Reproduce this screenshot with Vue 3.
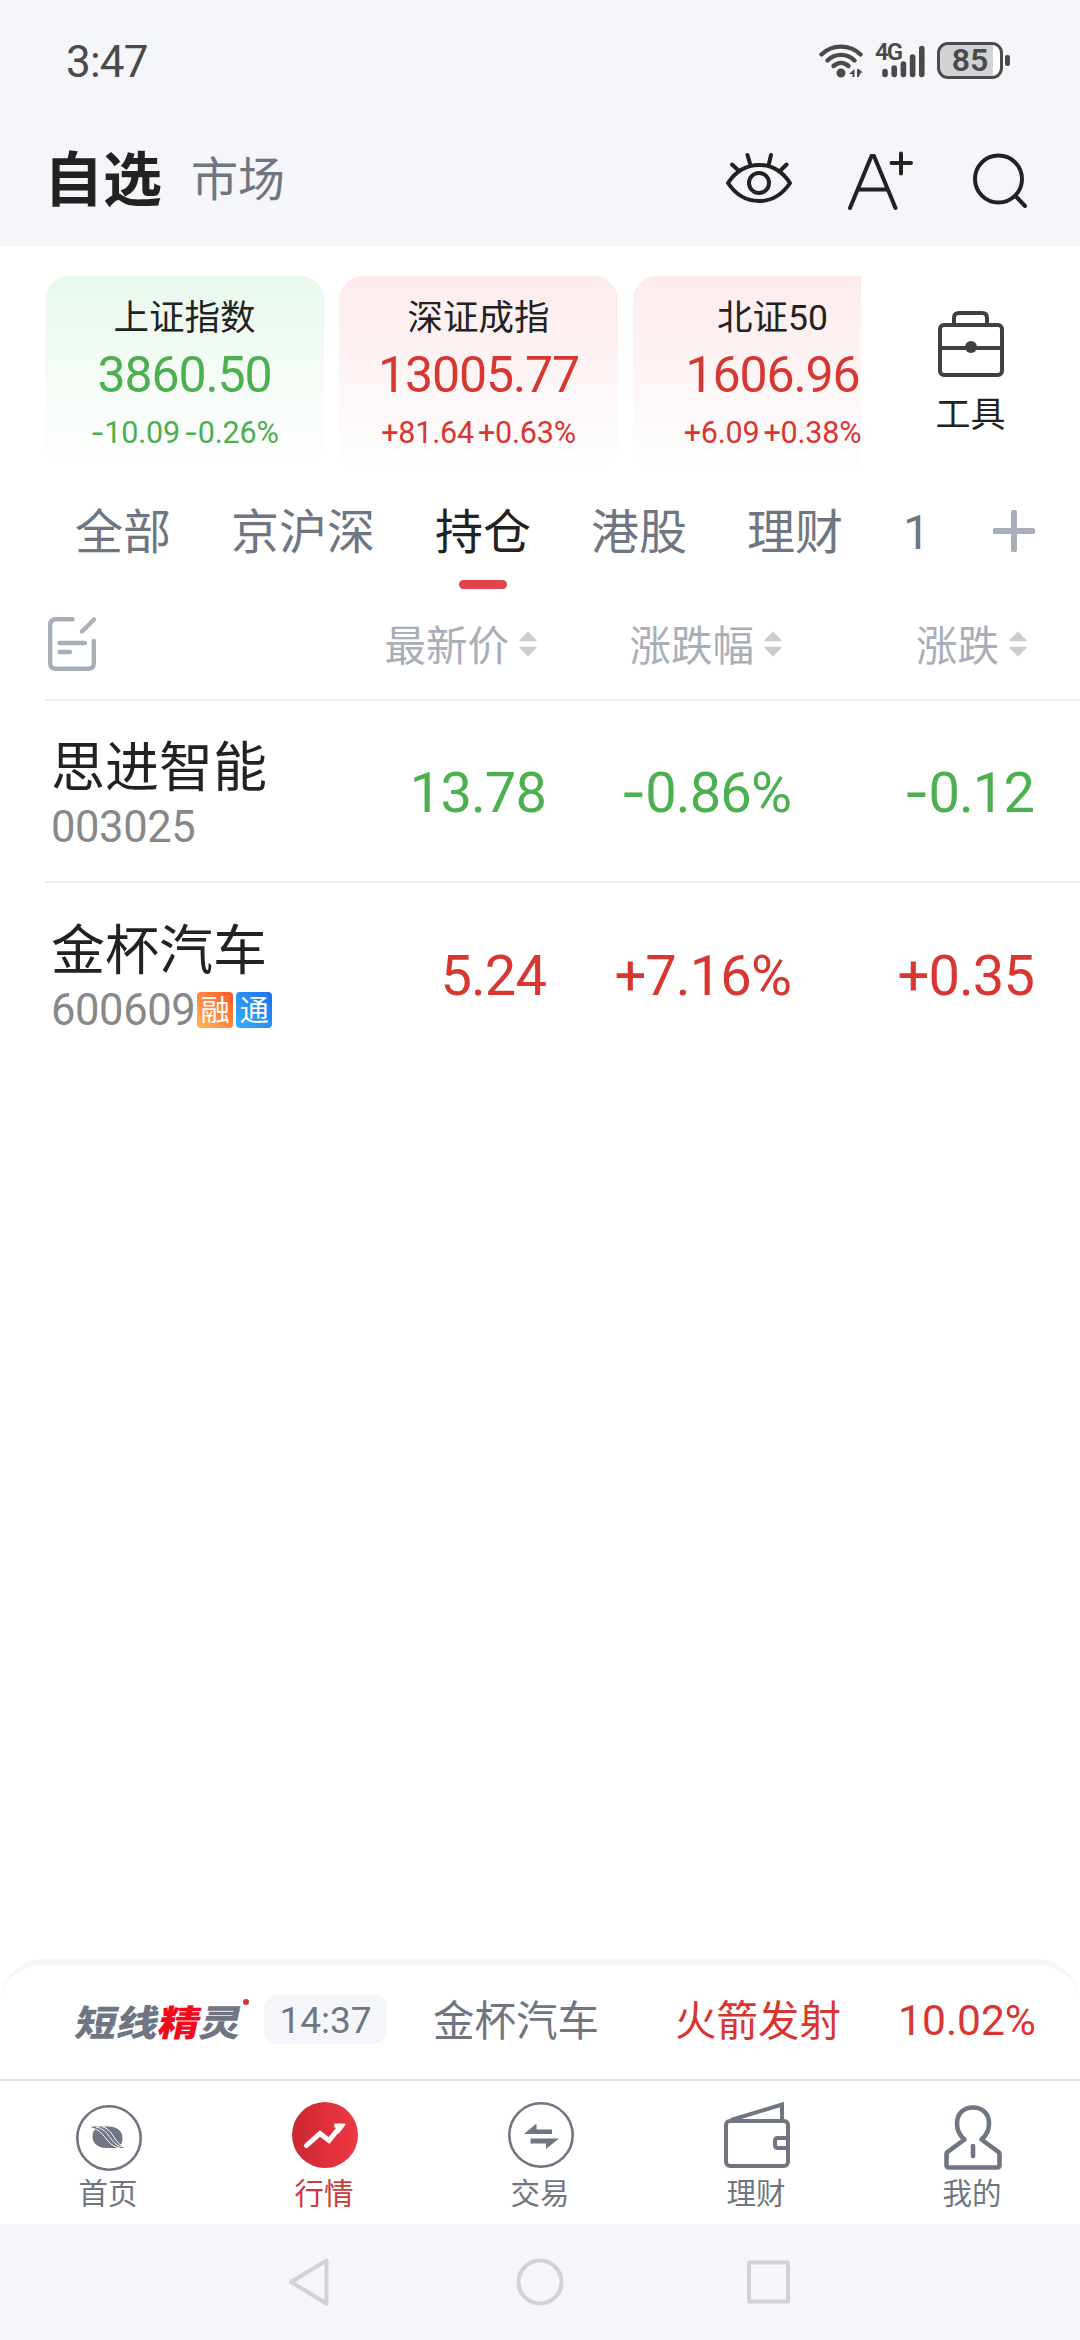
<template>
  <div class="screen">
    <header class="top">
      <div class="status-bar">
        <span class="clock">3:47</span>
        <div class="status-icons">
          <svg class="wifi" viewBox="0 0 44 36" width="44" height="36">
            <g fill="none" stroke="#4a4a4a" stroke-width="4.4" stroke-linecap="round">
              <path d="M2.500 11.500 C13 1 31 1 41.500 11.500" />
              <path d="M8.500 17.500 C16 10 28 10 35.500 17.500" />
              <path d="M14.500 23 C19 19 25 19 29.500 23" />
            </g>
            <circle cx="22" cy="30" r="4.500" fill="#4a4a4a" />
            <path d="M35.500 26 v8 h-2 v-3 h-3.500 z M38 26 h1.500 l4.500 3.500 h-2 l-2.500 4.500 h-1.500 z" fill="#4a4a4a" />
          </svg>
          <div class="signal">
            <span class="net">4G</span>
            <svg viewBox="0 0 52 36" width="52" height="36">
              <g stroke="#4a4a4a" stroke-width="5.600" stroke-linecap="round">
                <path d="M12 28.500V31.500M21.200 25V31.500M30.400 21V31.500M39.600 14V31.500M48.800 5.500V31.500" />
              </g>
            </svg>
          </div>
          <div class="battery">
            <span>85</span>
          </div>
          <i class="nub"></i>
        </div>
      </div>
      <div class="title-bar">
        <h1>自选</h1>
        <span class="market">市场</span>
        <div class="actions">
          <svg viewBox="0 0 66 60" width="66" height="60">
            <g fill="none" stroke="#222" stroke-width="4" stroke-linecap="round" stroke-linejoin="round">
              <path d="M2 33 C18 9 48 9 64 33 C48 57 18 57 2 33Z" />
              <circle cx="33" cy="33" r="10" />
              <path d="M12 20 L6 14.500M24 13.500 L21.500 5M43 13.500 L45 5M55 20 L60.500 14.500" />
            </g>
          </svg>
          <svg viewBox="0 0 66 60" width="66" height="60">
            <g fill="none" stroke="#222" stroke-width="4" stroke-linecap="round" stroke-linejoin="round">
              <path d="M3 58 L24.500 6 H27 L48.500 58M12 39.500H40" />
              <path d="M54 3.500V23.500M44.500 13H64" />
            </g>
          </svg>
          <svg viewBox="0 0 56 60" width="56" height="60">
            <g fill="none" stroke="#222" stroke-width="4" stroke-linecap="round">
              <circle cx="26.500" cy="29" r="23.500" />
              <path d="M43.500 46 L53 56" />
            </g>
          </svg>
        </div>
      </div>
    </header>

    <section class="indices">
      <div class="strip">
        <div v-for="item in indices" :key="item.name" class="card" :class="item.dir">
          <div class="card-name">{{ item.name }}</div>
          <div class="card-value">{{ item.value }}</div>
          <div class="card-change">
            <span><b class="sign">{{ item.change[0] }}</b>{{ item.change.slice(1) }}</span>
            <span><b class="sign">{{ item.percent[0] }}</b>{{ item.percent.slice(1) }}</span>
          </div>
        </div>
      </div>
      <div class="tools">
        <svg viewBox="0 0 66 66" width="66" height="66">
          <g fill="none" stroke="#404040" stroke-width="4">
            <rect x="2" y="14" width="62" height="50" rx="4" />
            <path d="M16 14 V7 Q16 2 21 2 H44 Q49 2 49 7 V14M2 37H64" />
          </g>
          <circle cx="33" cy="36" r="6" fill="#404040" />
        </svg>
        <span>工具</span>
      </div>
    </section>

    <nav class="tabs">
      <span v-for="tab in tabs" :key="tab" class="tab" :class="{ active: tab === current }" @click="current = tab">{{ tab }}</span>
      <svg class="plus" viewBox="0 0 42 42" width="42" height="42">
        <path d="M21 2.500V39.500M2.500 21H39.500" stroke="#a9afb9" stroke-width="6" stroke-linecap="round" />
      </svg>
    </nav>

    <section class="list">
      <div class="row head">
        <div class="col-name">
          <svg class="edit" viewBox="0 0 48 54" width="48" height="54">
            <g fill="none" stroke="#a9afb9" stroke-width="4.400" stroke-linecap="round" stroke-linejoin="round">
              <path d="M24.500 2.200 H8 Q2.200 2.200 2.200 8 V46 Q2.200 51.800 8 51.800 H40 Q45.800 51.800 45.800 46 V24" />
              <path d="M34 14.500 L46 2.500M11.500 26H37M11.500 35H22" />
            </g>
          </svg>
        </div>
        <div v-for="(col, i) in columns" :key="col" class="col" :class="'c' + i">
          <span>{{ col }}</span>
          <svg viewBox="0 0 18 26" width="18" height="26">
            <path d="M9 0.500 L17.500 9 Q18 10 17 10.300 H1 Q0 10 0.500 9Z M9 25.500 L17.500 17 Q18 16 17 15.700 H1 Q0 16 0.500 17Z" fill="#ccc" />
          </svg>
        </div>
      </div>
      <div v-for="stock in stocks" :key="stock.code" class="row stock">
        <div class="col-name">
          <div class="stock-name">{{ stock.name }}</div>
          <div class="stock-code">
            <span>{{ stock.code }}</span>
            <i v-for="tag in stock.tags" :key="tag.text" class="tag" :class="tag.kind">{{ tag.text }}</i>
          </div>
        </div>
        <div class="num c0" :class="stock.dir">{{ stock.price }}</div>
        <div class="num c1" :class="stock.dir"><b class="sign">{{ stock.percent[0] }}</b>{{ stock.percent.slice(1) }}</div>
        <div class="num c2" :class="stock.dir"><b class="sign">{{ stock.change[0] }}</b>{{ stock.change.slice(1) }}</div>
      </div>
    </section>

    <section class="ticker">
      <div class="logo">短线<em>精</em>灵</div>
      <i class="dot"></i>
      <span class="time">14:37</span>
      <span class="ticker-name">金杯汽车</span>
      <span class="ticker-event">火箭发射</span>
      <span class="ticker-rate">10.02%</span>
    </section>

    <nav class="bottom-nav">
      <div class="nav-item">
        <svg viewBox="0 0 68 70" width="68" height="70">
          <circle cx="35" cy="36" r="31.700" fill="none" stroke="#6f7682" stroke-width="2.600" />
          <path d="M17 24.500 H36 C44 25 48.500 30 48.500 36 C48.500 40 47.500 42 46.500 43 L50 46 H32 C23 46 18.500 40 18.500 35 C18.500 31 19.500 29 21 27.500Z" fill="#6f7682" />
          <path d="M18 26.500 C31 27 31 44 46 46M22 25 C36 27 35 42 48 45M28 24.500 C40 28 39 40 49 44" fill="none" stroke="#fff" stroke-width="1" />
        </svg>
        <span>首页</span>
      </div>
      <div class="nav-item on">
        <svg viewBox="0 0 68 70" width="68" height="70">
          <defs>
            <linearGradient id="market-red" x1="0" x2="1" y1="0" y2="0">
              <stop offset="0" stop-color="#cb2730" />
              <stop offset="1" stop-color="#f03845" />
            </linearGradient>
          </defs>
          <circle cx="35" cy="33" r="33" fill="url(#market-red)" />
          <path d="M16.500 43.500 L30 31.500 L39 38.500 L50 25" fill="none" stroke="#fff" stroke-width="5" stroke-linecap="round" />
          <path d="M44.500 21.500 H55 Q56 22 55 23.500 L48.500 32 L47 26.500 L44 25Z" fill="#fff" />
        </svg>
        <span>行情</span>
      </div>
      <div class="nav-item">
        <svg viewBox="0 0 68 70" width="68" height="70">
          <circle cx="35" cy="33" r="31.700" fill="none" stroke="#6f7682" stroke-width="2.600" />
          <path d="M18 32 L30.500 21.500 V27.500 H46 V32Z M24.500 36.500 H53 L40 47 V41.500 H24.500Z" fill="#6f7682" />
        </svg>
        <span>交易</span>
      </div>
      <div class="nav-item">
        <svg viewBox="0 0 68 70" width="68" height="70">
          <g fill="none" stroke="#6f7682" stroke-width="4">
            <rect x="4" y="19" width="62" height="45" rx="4" />
            <path d="M9 18 L60 2.500 V18M65 36 H56 Q53 36 53 39 V43 Q53 46 56 46 H65" />
          </g>
        </svg>
        <span>理财</span>
      </div>
      <div class="nav-item">
        <svg viewBox="0 0 68 70" width="68" height="70">
          <g fill="none" stroke="#6f7682" stroke-width="4.600" stroke-linejoin="round">
            <path d="M26.500 37.500 C21 33 19 27 19 21.500 C19 11 26 5.500 35 5.500 C44 5.500 51 11 51 21.500 C51 27 49 33 43.500 37.500 L60.500 50 Q61.500 51 61.500 52.500 V63 Q61.500 65.500 59 65.500 H11 Q8.500 65.500 8.500 63 V52.500 Q8.500 51 9.500 50Z" />
            <path d="M35 44V54" stroke-linecap="round" />
          </g>
        </svg>
        <span>我的</span>
      </div>
    </nav>

    <footer class="system-bar">
      <svg viewBox="0 0 504 48" width="504" height="48">
        <g fill="none" stroke="#d2d2d2" stroke-width="4" stroke-linejoin="round">
          <path d="M38.500 2.500 V45.500 L3 24Z" />
          <circle cx="252" cy="24" r="21.500" />
          <rect x="461" y="4.500" width="39" height="39" />
        </g>
      </svg>
    </footer>
  </div>
</template>

<script setup>
import { ref } from 'vue'

const current = ref('持仓')
const tabs = ['全部', '京沪深', '持仓', '港股', '理财', '1']
const columns = ['最新价', '涨跌幅', '涨跌']

const indices = [
  { name: '上证指数', value: '3860.50', change: '-10.09', percent: '-0.26%', dir: 'down' },
  { name: '深证成指', value: '13005.77', change: '+81.64', percent: '+0.63%', dir: 'up' },
  { name: '北证50', value: '1606.96', change: '+6.09', percent: '+0.38%', dir: 'up' }
]

const stocks = [
  { name: '思进智能', code: '003025', tags: [], price: '13.78', percent: '-0.86%', change: '-0.12', dir: 'down' },
  {
    name: '金杯汽车',
    code: '600609',
    tags: [
      { text: '融', kind: 'margin' },
      { text: '通', kind: 'connect' }
    ],
    price: '5.24',
    percent: '+7.16%',
    change: '+0.35',
    dir: 'up'
  }
]
</script>

<style>
body {
  margin: 0;
  background: #fff;
}
</style>

<style scoped>
.screen {
  display: flex;
  flex-direction: column;
  width: 1080px;
  height: 2340px;
  overflow: hidden;
  background: #fff;
  color: #222;
  font-family: "Noto Sans CJK SC", "Noto Sans", sans-serif;
  white-space: nowrap;
}

.clock,
.net,
.battery,
.card-name,
.card-value,
.card-change,
.tabs,
.stock-code span,
.num,
.time,
.ticker-rate {
  font-family: Roboto, "Noto Sans CJK SC", sans-serif;
}

svg {
  display: block;
  flex: none;
}

.top {
  height: 246px;
  flex: none;
  background: #f4f6fa;
}

.status-bar {
  display: flex;
  align-items: center;
  justify-content: space-between;
  height: 121px;
  padding: 0 70px 0 66px;
  color: #4a4a4a;
}

.clock {
  font-size: 44px;
  line-height: 60px;
  padding-top: 3px;
  letter-spacing: -0.8px;
}

.status-icons {
  display: flex;
  align-items: center;
}

.signal {
  position: relative;
  margin: 0 12px 0 10px;
}

.net {
  position: absolute;
  left: 2px;
  top: -3px;
  font-size: 24px;
  line-height: 24px;
  font-weight: 600;
  letter-spacing: -2px;
}

.battery {
  box-sizing: border-box;
  width: 66px;
  height: 37px;
  border: 3px solid #4a4a4a;
  border-radius: 11px;
  background: linear-gradient(90deg, #d2d3d6 88%, #fff 88%);
  text-align: center;
  font-size: 32px;
  line-height: 31px;
  font-weight: 600;
}

.nub {
  width: 5px;
  height: 11px;
  margin-left: 2px;
  border-radius: 2px;
  background: #4a4a4a;
}

.title-bar {
  display: flex;
  align-items: center;
  box-sizing: border-box;
  height: 125px;
  padding: 0 52px 8px 44px;
}

h1 {
  margin: 0;
  font-size: 59px;
  line-height: 80px;
  font-weight: 700;
  padding-bottom: 7px;
}

.market {
  margin-left: 29px;
  font-size: 47px;
  line-height: 60px;
  color: #6f7682;
  padding-bottom: 7px;
}

.actions {
  display: flex;
  margin-left: auto;
}

.actions svg:nth-child(2) {
  margin: 0 59px 0 55px;
}

.indices {
  display: flex;
  height: 195px;
  padding: 30px 0 0 45px;
  flex: none;
}

.strip {
  display: flex;
  gap: 15px;
  width: 816px;
  overflow: hidden;
}

.card {
  flex: none;
  width: 279px;
  height: 195px;
  border-radius: 24px;
  text-align: center;
}

.card.down {
  background: linear-gradient(#e9f8ec, #fff);
}

.card.up {
  background: linear-gradient(#fdebec, #fefefe);
}

.card-name {
  font-size: 35.5px;
  line-height: 44px;
  padding-top: 20px;
  color: #222;
}

.card-value {
  font-size: 50px;
  line-height: 60px;
  margin-top: 5px;
  letter-spacing: -1.1px;
}

.card-change {
  display: flex;
  justify-content: center;
  gap: 4px;
  font-size: 30.5px;
  line-height: 40px;
  margin-top: 8px;
  letter-spacing: -0.2px;
}

/* wider minus than the digits' own font has */
.sign {
  font-family: Inter, sans-serif;
  font-weight: 400;
  line-height: 1;
}

.up .sign {
  font-family: inherit;
}

.down {
  color: #4caf50;
}

.up {
  color: #d83631;
}

.tools {
  display: flex;
  flex: 1;
  flex-direction: column;
  align-items: center;
  padding-top: 35px;
  font-size: 35px;
  line-height: 44px;
}

.tools span {
  margin-top: 13px;
}

.tabs {
  display: flex;
  align-items: flex-start;
  gap: 60px;
  height: 118px;
  padding: 0 45px 0 75px;
  flex: none;
  font-size: 48px;
  line-height: 60px;
  color: #6f7682;
}

.tab {
  display: flex;
  flex-direction: column;
  align-items: center;
  padding-top: 32px;
}

.tab::after {
  content: "";
  width: 48px;
  height: 9px;
  margin-top: 17px;
  border-radius: 5px;
}

.tab:nth-child(6)::after {
  width: 0;
}

.tab.active {
  color: #222;
}

.tab.active::after {
  background: #e0444a;
}

.plus {
  margin: 39px 0 0 auto;
}

.row {
  display: flex;
  align-items: center;
  box-sizing: border-box;
  margin-left: 45px;
}

.head {
  height: 112px;
  border-bottom: 2px solid #ededed;
  font-size: 41.5px;
  line-height: 50px;
  color: #a9afb9;
}

.head span {
  padding-bottom: 3px;
}

.col-name {
  width: 240px;
}

.edit {
  margin-left: 3px;
}

.col {
  display: flex;
  align-items: center;
  justify-content: flex-end;
  gap: 10px;
}

.head .c0 {
  width: 252px;
}

.head .c1 {
  width: 245px;
}

.head .c2 {
  width: 245px;
}

.stock {
  height: 182px;
  border-bottom: 2px solid #ededed;
}

.stock:last-child {
  border-bottom: 0;
}

.stock .col-name {
  padding-left: 6px;
  width: 234px;
}

.stock-name {
  font-size: 54px;
  line-height: 64px;
  color: #222;
}

.stock-code {
  display: flex;
  align-items: center;
  margin: 4px 0 -4px;
  font-size: 43.5px;
  line-height: 54px;
  color: #888;
  letter-spacing: -0.4px;
}

.stock-code span {
  padding-top: 1px;
}

.tag {
  width: 36px;
  height: 36px;
  margin-left: 2px;
  border-radius: 4px;
  color: #fff;
  font-size: 29px;
  line-height: 33px;
  font-style: normal;
  letter-spacing: 0;
  text-align: center;
}

.tag + .tag {
  margin-left: 3px;
}

.margin {
  background: linear-gradient(45deg, #ffb65c, #ff5722);
}

.connect {
  background: linear-gradient(45deg, #35b0fb, #1f70ee);
}

.num {
  text-align: right;
  font-size: 56px;
  line-height: 70px;
  padding-top: 4px;
  letter-spacing: -0.9px;
}

.stock .c0 {
  width: 261px;
}

.stock .c1 {
  width: 245px;
}

.stock .c2 {
  width: 243px;
}

.ticker {
  display: flex;
  align-items: center;
  box-sizing: border-box;
  height: 122px;
  margin-top: auto;
  padding: 0 44px 5px 75px;
  flex: none;
  border-top: 6px solid #f4f6fa;
  border-bottom: 2px solid #e4e4e6;
  border-radius: 44px 44px 0 0;
  font-size: 41.5px;
  line-height: 50px;
  color: #6f7682;
}

.logo {
  width: 164px;
  font-size: 36px;
  line-height: 50px;
  font-weight: 900;
  transform: translateX(2px) skewX(-12deg) scaleX(1.15);
  transform-origin: 0 50%;
}

.logo em {
  font-style: normal;
  color: #f5081c;
}

.dot {
  width: 6px;
  height: 6px;
  margin: -36px 0 0 4px;
  border-radius: 50%;
  background: #c93b40;
}

.time {
  width: 123px;
  height: 49px;
  margin-left: 15px;
  border-radius: 12px;
  background: #f4f6fa;
  text-align: center;
  font-size: 37px;
  line-height: 51px;
}

.ticker-name {
  margin-left: 46px;
  padding-bottom: 3px;
}

.ticker-event {
  margin-left: 76px;
  padding-bottom: 3px;
  color: #d83631;
}

.ticker-rate {
  margin-left: auto;
  padding-top: 3px;
  font-size: 42.5px;
  color: #d83631;
}

.bottom-nav {
  display: flex;
  height: 143px;
  flex: none;
}

.nav-item {
  display: flex;
  flex: 1;
  flex-direction: column;
  align-items: center;
  padding-top: 21px;
  font-size: 29.5px;
  line-height: 36px;
  color: #6f7682;
}

.nav-item span {
  margin-top: 1px;
}

.nav-item.on {
  color: #c93b3d;
}

.system-bar {
  display: flex;
  align-items: center;
  justify-content: center;
  height: 116px;
  flex: none;
  background: #f4f6fa;
}
</style>
